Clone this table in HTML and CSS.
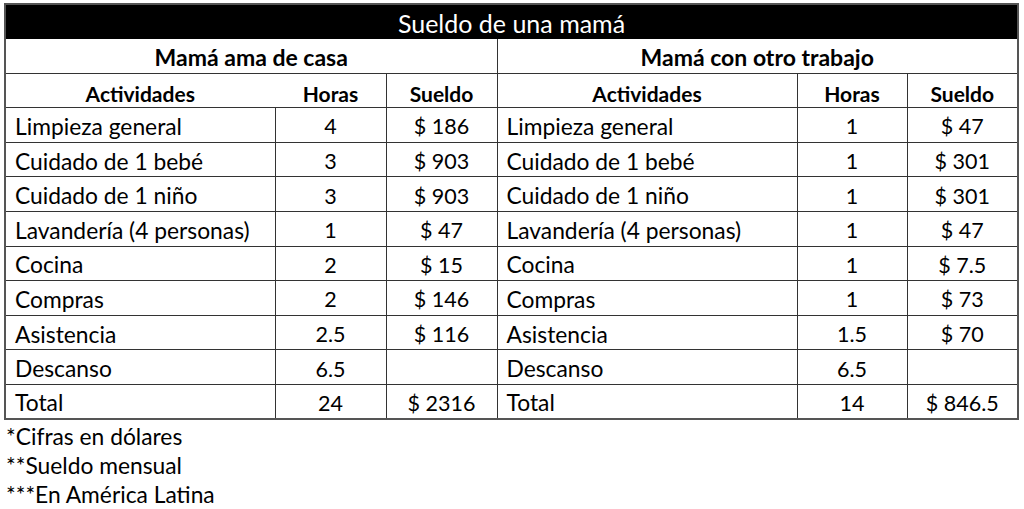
FILE: index.html
```html
<!DOCTYPE html>
<html lang="es">
<head>
<meta charset="utf-8">
<title>Sueldo de una mamá</title>
<link rel="stylesheet" href="styles.css">
</head>
<body>
<table class="sueldo">
  <colgroup>
    <col class="c-act"><col class="c-num"><col class="c-num">
    <col class="c-act2"><col class="c-num2"><col class="c-num">
  </colgroup>
  <thead>
    <tr class="title"><th colspan="6">Sueldo de una mamá</th></tr>
    <tr class="group"><th colspan="3">Mamá ama de casa</th><th colspan="3">Mamá con otro trabajo</th></tr>
    <tr class="head"><th class="nosep">Actividades</th><th>Horas</th><th>Sueldo</th><th>Actividades</th><th>Horas</th><th>Sueldo</th></tr>
  </thead>
  <tbody>
    <tr><td>Limpieza general</td><td>4</td><td>$ 186</td><td>Limpieza general</td><td>1</td><td>$ 47</td></tr>
    <tr><td>Cuidado de 1 bebé</td><td>3</td><td>$ 903</td><td>Cuidado de 1 bebé</td><td>1</td><td>$ 301</td></tr>
    <tr><td>Cuidado de 1 niño</td><td>3</td><td>$ 903</td><td>Cuidado de 1 niño</td><td>1</td><td>$ 301</td></tr>
    <tr><td>Lavandería (4 personas)</td><td>1</td><td>$ 47</td><td>Lavandería (4 personas)</td><td>1</td><td>$ 47</td></tr>
    <tr><td>Cocina</td><td>2</td><td>$ 15</td><td>Cocina</td><td>1</td><td>$ 7.5</td></tr>
    <tr><td>Compras</td><td>2</td><td>$ 146</td><td>Compras</td><td>1</td><td>$ 73</td></tr>
    <tr><td>Asistencia</td><td>2.5</td><td>$ 116</td><td>Asistencia</td><td>1.5</td><td>$ 70</td></tr>
    <tr><td>Descanso</td><td>6.5</td><td></td><td>Descanso</td><td>6.5</td><td></td></tr>
    <tr><td>Total</td><td>24</td><td>$ 2316</td><td>Total</td><td>14</td><td>$ 846.5</td></tr>
  </tbody>
</table>
<div class="notes">
  <p>*Cifras en dólares</p>
  <p>**Sueldo mensual</p>
  <p>***En América Latina</p>
</div>
</body>
</html>
```
FILE: styles.css
```css
html, body { background: #fff; }
body {
  margin: 0;
  padding: 3px 0 0 4px;
  font-family: Lato, "Open Sans", sans-serif;
  color: #000;
}
.sueldo {
  border-collapse: collapse;
  table-layout: fixed;
  width: 1014px;
  border: 2px solid #555;
  font-size: 21.5px;
  line-height: 1;
}
.c-act { width: 270px; }
.c-num { width: 111px; }
.c-act2 { width: 300px; }
.c-num2 { width: 110px; }
.sueldo tr { height: 34.6px; }
.sueldo th, .sueldo td {
  border: 1px solid #333;
  padding: 0 0 4px;
  text-align: center;
  vertical-align: bottom;
  white-space: nowrap;
}
.sueldo th { font-weight: 700; font-size: 21px; padding-bottom: 3.5px; }
.sueldo .title th {
  background: #000;
  color: #fff;
  font-weight: 400;
  font-size: 25px;
  border-color: #000;
  padding-bottom: 2.5px;
}
.sueldo .group th { font-size: 23px; padding-bottom: 3.5px; }
.sueldo .head th.nosep { border-right-color: transparent; }
.sueldo td:nth-child(1), .sueldo td:nth-child(4) {
  text-align: left;
  padding-left: 9px;
  font-size: 22.8px;
}
.notes {
  margin-top: 2px;
  padding-left: 2px;
  font-size: 22.8px;
  line-height: 28.8px;
}
.notes p { margin: 0; }
```
